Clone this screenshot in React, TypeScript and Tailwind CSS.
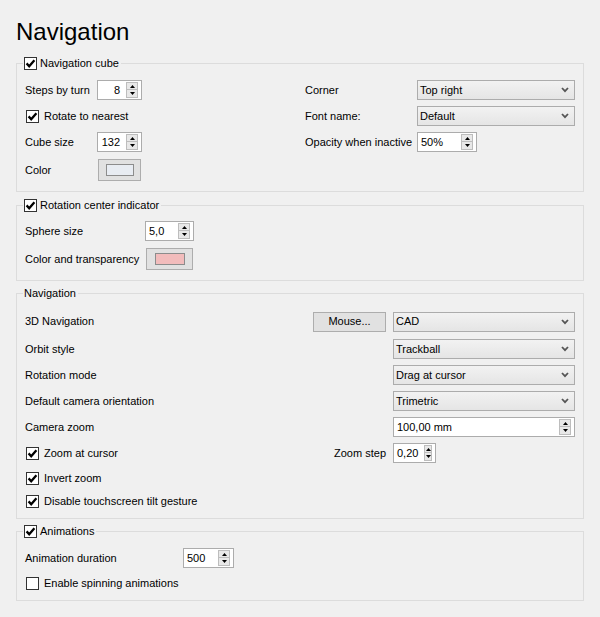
import type { ReactNode } from 'react';

const Check = ({ checked }: { checked: boolean }) => (
  <span className="flex h-[13px] w-[13px] shrink-0 items-center justify-center border border-[#333333] bg-white">
    {checked && (
      <svg width="11" height="11" viewBox="0 0 11 11">
        <path d="M1.6 5.4 L4.2 8.2 L9.4 2.2" fill="none" stroke="#000" strokeWidth="2.3" />
      </svg>
    )}
  </span>
);

const CheckLabel = ({ checked, label, gap = 'gap-[5px]' }: { checked: boolean; label: string; gap?: string }) => (
  <span className={`flex items-center ${gap}`}>
    <Check checked={checked} />
    <span>{label}</span>
  </span>
);

const SpinBox = ({ value, w, right }: { value: string; w: string; right?: boolean }) => (
  <div className={`flex h-[20px] ${w} shrink-0 items-center border border-[#acacac] bg-white`}>
    <span className={`flex-1 pl-[3px] pr-[6px] ${right ? 'text-right' : 'text-left'}`}>{value}</span>
    <div className="mr-[3px] flex h-[16px] w-[12px] flex-col">
      <div className="flex h-[8px] items-center justify-center border border-[#bdbdbd] bg-[#e8e8e8]">
        <svg width="5" height="3" viewBox="0 0 5 3">
          <path d="M0 3 L2.5 0 L5 3 Z" fill="#000" />
        </svg>
      </div>
      <div className="-mt-[1px] flex h-[9px] items-center justify-center border border-[#bdbdbd] bg-[#e8e8e8]">
        <svg width="5" height="3" viewBox="0 0 5 3">
          <path d="M0 0 L2.5 3 L5 0 Z" fill="#000" />
        </svg>
      </div>
    </div>
  </div>
);

const Combo = ({ value, w }: { value: string; w: string }) => (
  <div className={`flex h-[20px] ${w} shrink-0 items-center border border-[#acacac] bg-linear-to-b from-[#f2f2f2] to-[#e5e5e5] pl-[2px] pr-[5px]`}>
    <span className="flex-1">{value}</span>
    <svg width="8" height="6" viewBox="0 0 8 6">
      <path d="M1 1 L4 4.2 L7 1" fill="none" stroke="#555" strokeWidth="1.8" />
    </svg>
  </div>
);

const ColorButton = ({ w, swatch, color }: { w: string; swatch: string; color: string }) => (
  <div className={`flex h-[22px] ${w} shrink-0 items-center justify-center border border-[#adadad] bg-[#e1e1e1]`}>
    <div className={`h-[12px] ${swatch} border border-[#8c8c8c] ${color}`} />
  </div>
);

const GroupBox = ({ title, checked, className, children }: { title: string; checked?: boolean; className: string; children: ReactNode }) => (
  <fieldset className={`min-w-0 border border-[#dcdcdc] px-[8px] ${className}`}>
    <legend className="-ml-[2px] flex h-[13px] items-center pl-[1px] pr-[2px]">
      {checked === undefined ? <span>{title}</span> : <CheckLabel checked={checked} label={title} gap="gap-[3px]" />}
    </legend>
    {children}
  </fieldset>
);

export default function App() {
  return (
    <div className="h-[617px] w-[600px] bg-[#f0f0f0] px-4 font-['Liberation_Sans',Arial,sans-serif] text-[11px] leading-[13px] text-black">
      <h1 className="pt-[18px] text-[24px] leading-[28px]">Navigation</h1>

      <GroupBox title="Navigation cube" checked className="mt-[11px] pb-[6px] pt-[7px]">
        <div className="flex">
          <div className="w-[280px]">
            <div className="flex h-[26px] items-center">
              <span className="w-[72px]">Steps by turn</span>
              <SpinBox value="8" w="w-[45px]" right />
            </div>
            <div className="flex h-[26px] items-center pl-[1px]">
              <CheckLabel checked label="Rotate to nearest" />
            </div>
            <div className="flex h-[26px] items-center">
              <span className="w-[72px]">Cube size</span>
              <SpinBox value="132" w="w-[45px]" right />
            </div>
            <div className="flex h-[30px] items-center">
              <span className="w-[73px]">Color</span>
              <ColorButton w="w-[43px]" swatch="w-[28px]" color="bg-[#e8ecf2]" />
            </div>
          </div>
          <div className="flex-1">
            <div className="flex h-[26px] items-center">
              <span className="w-[112px]">Corner</span>
              <Combo value="Top right" w="flex-1" />
            </div>
            <div className="flex h-[26px] items-center">
              <span className="w-[112px]">Font name:</span>
              <Combo value="Default" w="flex-1" />
            </div>
            <div className="flex h-[26px] items-center">
              <span className="w-[112px]">Opacity when inactive</span>
              <SpinBox value="50%" w="w-[60px]" />
            </div>
          </div>
        </div>
      </GroupBox>

      <GroupBox title="Rotation center indicator" checked className="mt-[7px] pb-[6px] pt-[6px]">
        <div className="flex h-[26px] items-center">
          <span className="w-[120px]">Sphere size</span>
          <SpinBox value="5,0" w="w-[49px]" />
        </div>
        <div className="flex h-[30px] items-center">
          <span className="w-[121px]">Color and transparency</span>
          <ColorButton w="w-[47px]" swatch="w-[30px]" color="bg-[#f2bcbc]" />
        </div>
      </GroupBox>

      <GroupBox title="Navigation" className="mt-[6px] pb-[6px] pt-[8px]">
        <div className="flex h-[27px] items-center">
          <span className="flex-1">3D Navigation</span>
          <div className="mr-[7px] flex h-[20px] w-[73px] items-center justify-center border border-[#adadad] bg-[#e1e1e1]">Mouse...</div>
          <Combo value="CAD" w="w-[182px]" />
        </div>
        <div className="mt-[1px] flex h-[26px] items-center">
          <span className="flex-1">Orbit style</span>
          <Combo value="Trackball" w="w-[182px]" />
        </div>
        <div className="flex h-[26px] items-center">
          <span className="flex-1">Rotation mode</span>
          <Combo value="Drag at cursor" w="w-[182px]" />
        </div>
        <div className="flex h-[26px] items-center">
          <span className="flex-1">Default camera orientation</span>
          <Combo value="Trimetric" w="w-[182px]" />
        </div>
        <div className="flex h-[26px] items-center">
          <span className="flex-1">Camera zoom</span>
          <SpinBox value="100,00 mm" w="w-[182px]" />
        </div>
        <div className="flex h-[26px] items-center pl-[1px]">
          <span className="flex-1">
            <CheckLabel checked label="Zoom at cursor" />
          </span>
          <span className="mr-[7px]">Zoom step</span>
          <div className="w-[182px]">
            <SpinBox value="0,20" w="w-[43px]" />
          </div>
        </div>
        <div className="flex h-[24px] items-center pl-[1px]">
          <CheckLabel checked label="Invert zoom" />
        </div>
        <div className="flex h-[22px] items-center pl-[1px]">
          <CheckLabel checked label="Disable touchscreen tilt gesture" />
        </div>
      </GroupBox>

      <GroupBox title="Animations" checked className="mt-[6px] pb-[5px] pt-[7px]">
        <div className="flex h-[26px] items-center">
          <span className="w-[158px]">Animation duration</span>
          <SpinBox value="500" w="w-[51px]" />
        </div>
        <div className="flex h-[24px] items-center pl-[1px]">
          <CheckLabel checked={false} label="Enable spinning animations" />
        </div>
      </GroupBox>
    </div>
  );
}
